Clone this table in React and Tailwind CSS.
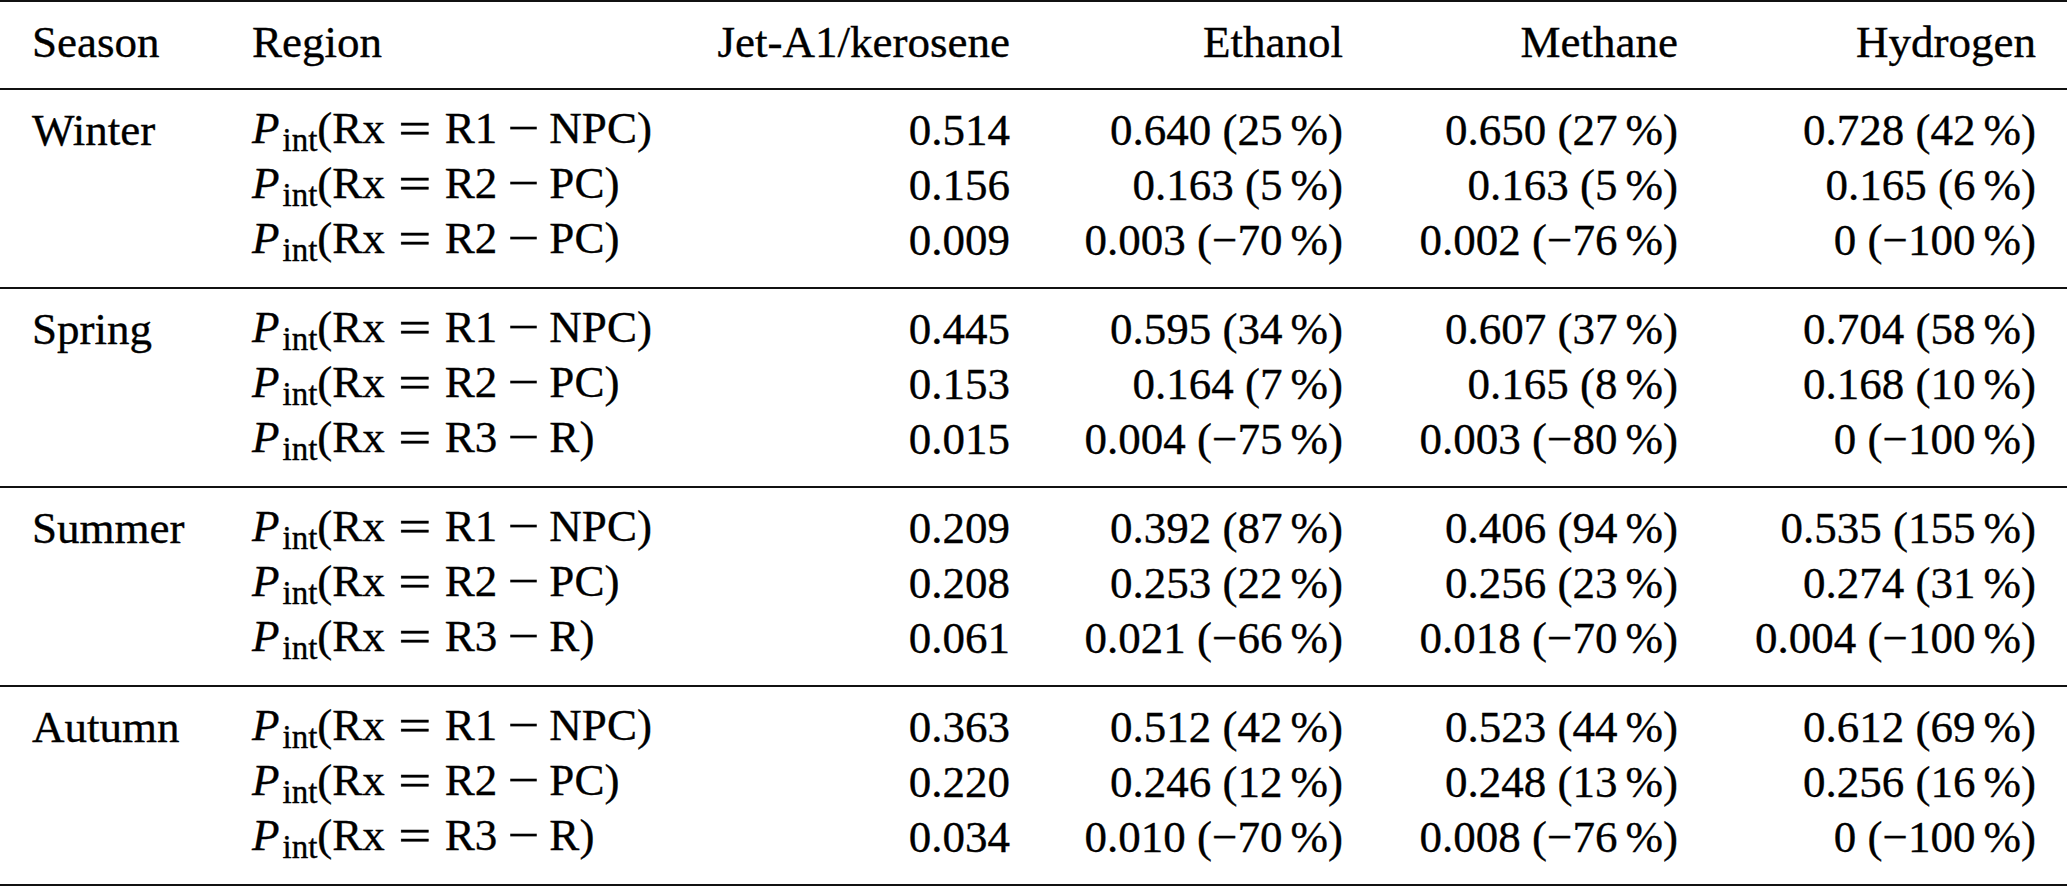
import React from "react";

const groups = [
  {
    season: "Winter",
    rows: [
      ["R1", "NPC", "0.514", "0.640", "25", "0.650", "27", "0.728", "42"],
      ["R2", "PC", "0.156", "0.163", "5", "0.163", "5", "0.165", "6"],
      ["R2", "PC", "0.009", "0.003", "\u221270", "0.002", "\u221276", "0", "\u2212100"],
    ],
  },
  {
    season: "Spring",
    rows: [
      ["R1", "NPC", "0.445", "0.595", "34", "0.607", "37", "0.704", "58"],
      ["R2", "PC", "0.153", "0.164", "7", "0.165", "8", "0.168", "10"],
      ["R3", "R", "0.015", "0.004", "\u221275", "0.003", "\u221280", "0", "\u2212100"],
    ],
  },
  {
    season: "Summer",
    rows: [
      ["R1", "NPC", "0.209", "0.392", "87", "0.406", "94", "0.535", "155"],
      ["R2", "PC", "0.208", "0.253", "22", "0.256", "23", "0.274", "31"],
      ["R3", "R", "0.061", "0.021", "\u221266", "0.018", "\u221270", "0.004", "\u2212100"],
    ],
  },
  {
    season: "Autumn",
    rows: [
      ["R1", "NPC", "0.363", "0.512", "42", "0.523", "44", "0.612", "69"],
      ["R2", "PC", "0.220", "0.246", "12", "0.248", "13", "0.256", "16"],
      ["R3", "R", "0.034", "0.010", "\u221270", "0.008", "\u221276", "0", "\u2212100"],
    ],
  },
];

// P_int(Rx = R1 − NPC), set like LaTeX math
const Region = ({ rx, kind }) => (
  <span className="whitespace-nowrap">
    <i>P</i>
    <span className="relative top-[8px] ml-[3px] text-[33px]">int</span>
    (Rx
    <span className="inline-block w-[60px] text-center">
      <span className="inline-block scale-x-[1.3]">=</span>
    </span>
    {rx}
    <span className="inline-block w-[52px] text-center">
      <span className="inline-block scale-x-[1.25]">{"\u2212"}</span>
    </span>
    {kind})
  </span>
);

const Change = ({ value, pct }) => (
  <span className="whitespace-nowrap">
    {value} ({pct}
    <span className="ml-[8px]">%</span>)
  </span>
);

const Row = ({ season, cells }) => {
  const [rx, kind, jet, eth, ethPct, met, metPct, hyd, hydPct] = cells;
  return (
    <div className="flex h-[55px] items-center leading-[55px]">
      <div className="w-[252px] pl-[32px]">{season}</div>
      <div className="w-[400px]">
        <Region rx={rx} kind={kind} />
      </div>
      <div className="w-[358px] text-right">{jet}</div>
      <div className="w-[333px] text-right">
        <Change value={eth} pct={ethPct} />
      </div>
      <div className="w-[335px] text-right">
        <Change value={met} pct={metPct} />
      </div>
      <div className="w-[358px] text-right">
        <Change value={hyd} pct={hydPct} />
      </div>
    </div>
  );
};

export default function App() {
  return (
    <div
      className="w-[2067px] h-[886px] bg-white text-black text-[45px] overflow-hidden [-webkit-text-stroke:0.35px_black]"
      style={{ fontFamily: '"Liberation Serif", "Times New Roman", serif' }}
    >
      <div className="border-t-2 border-b-2 border-[#111]">
        <div className="pt-[13px] pb-[18px]">
          <div className="flex h-[55px] items-center leading-[55px]">
            <div className="w-[252px] pl-[32px]">Season</div>
            <div className="w-[400px]">Region</div>
            <div className="w-[358px] text-right">Jet-A1/kerosene</div>
            <div className="w-[333px] text-right">Ethanol</div>
            <div className="w-[335px] text-right">Methane</div>
            <div className="w-[358px] text-right">Hydrogen</div>
          </div>
        </div>
        {groups.map((g) => (
          <div key={g.season} className="border-t-2 border-[#111] pt-[13px] pb-[19px]">
            {g.rows.map((r, i) => (
              <Row key={i} season={i === 0 ? g.season : ""} cells={r} />
            ))}
          </div>
        ))}
      </div>
    </div>
  );
}
